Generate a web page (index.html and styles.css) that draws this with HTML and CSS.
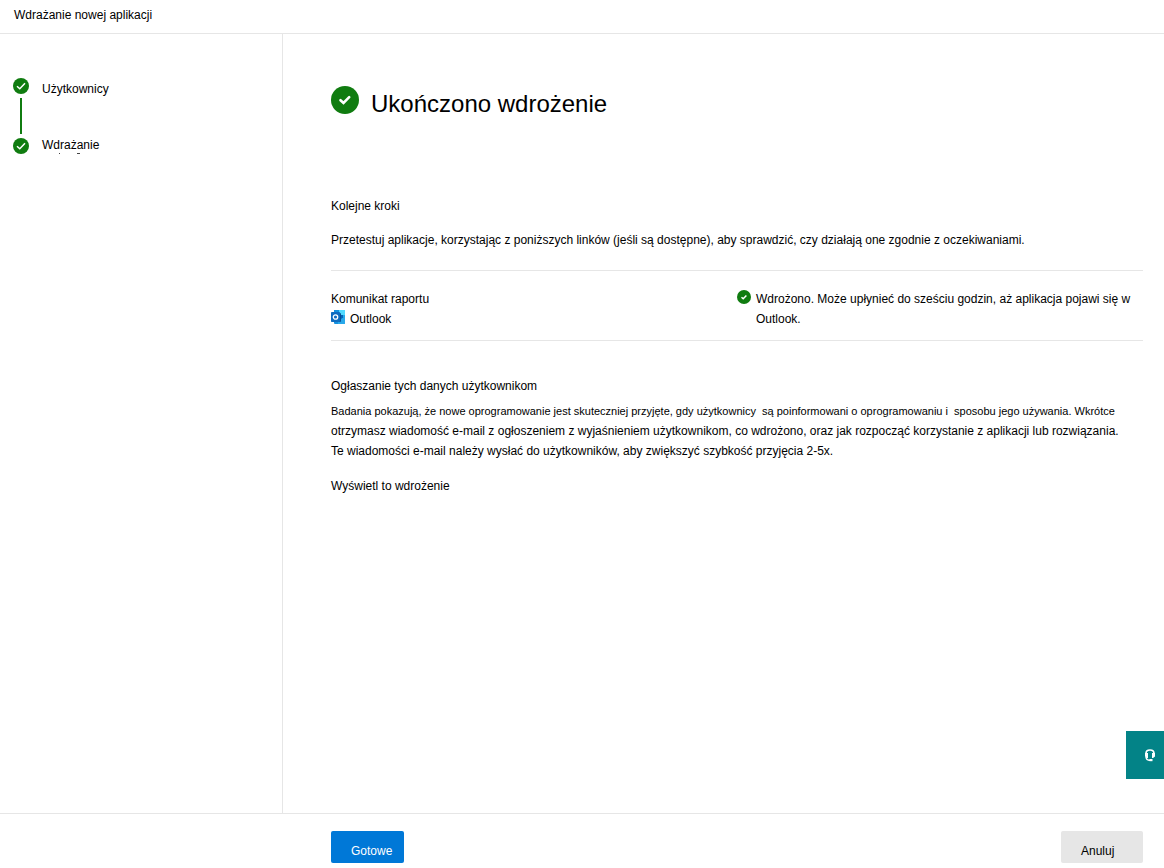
FILE: index.html
```html
<!DOCTYPE html>
<html lang="pl">
<head>
<meta charset="utf-8">
<meta name="viewport" content="width=device-width, initial-scale=1">
<title>Wdrażanie nowej aplikacji</title>
<link rel="stylesheet" href="styles.css">
</head>
<body>
<header class="topbar">Wdrażanie nowej aplikacji</header>
<div class="layout">
  <nav class="sidebar" aria-label="Kroki">
    <ol class="steps">
      <li class="step">
        <svg class="step-icon" viewBox="0 0 16 16" aria-hidden="true"><circle cx="8" cy="8" r="8" fill="#107c10"/><path d="M4 8.2l2.800 2.600 5.200-5.500" fill="none" stroke="#fff" stroke-width="1.500"/></svg>
        <span class="step-label">Użytkownicy</span>
      </li>
      <li class="step">
        <svg class="step-icon" viewBox="0 0 16 16" aria-hidden="true"><circle cx="8" cy="8" r="8" fill="#107c10"/><path d="M4 8.2l2.800 2.600 5.200-5.500" fill="none" stroke="#fff" stroke-width="1.500"/></svg>
        <span class="step-label">Wdrażanie<svg class="step-marks" viewBox="0 0 40 2" aria-hidden="true"><path d="M17 .5h1M35 .5h3" stroke="#444"/></svg></span>
      </li>
    </ol>
  </nav>
  <main class="content">
    <div class="title">
      <svg class="title-icon" viewBox="0 0 28 28" aria-hidden="true"><circle cx="14" cy="14" r="14" fill="#107c10"/><path d="M9.500 14.200l3 2.800 5.700-5.800" fill="none" stroke="#fff" stroke-width="2.600" stroke-linecap="round"/></svg>
      <h1>Ukończono wdrożenie</h1>
    </div>
    <section class="next">
      <h2>Kolejne kroki</h2>
      <p>Przetestuj aplikacje, korzystając z poniższych linków (jeśli są dostępne), aby sprawdzić, czy działają one zgodnie z oczekiwaniami.</p>
    </section>
    <section class="app-row">
      <div class="app">
        <h2>Komunikat raportu</h2>
        <div class="product">
          <svg class="outlook" viewBox="0 0 14 14" aria-hidden="true"><path d="M3 0h11v9H3z" fill="#28a8ea"/><path d="M3 0h5v4H3z" fill="#1490df"/><path d="M8 0h6v5H8z" fill="#50d9ff"/><path d="M8 5h4v4H8z" fill="#0364b8"/><path d="M3 8l5.500 2L14 6.500V13q0 1-1 1H4q-1 0-1-1z" fill="#1490df"/><path d="M14 6.500L7 11v3h6q1 0 1-1z" fill="#28a8ea"/><path d="M3 3h6q1 0 1 1v7q0 1-1 1H3z" fill="#0a4f94"/><rect y="2" width="9" height="10" rx=".7" fill="#0f6cc0"/><circle cx="4.500" cy="7" r="2.200" fill="none" stroke="#fff" stroke-width="1.300"/></svg>
          <span>Outlook</span>
        </div>
      </div>
      <div class="status">
        <svg class="status-icon" viewBox="0 0 14 14" aria-hidden="true"><circle cx="7" cy="7" r="7" fill="#107c10"/><path d="M4.500 7.200l1.700 1.500 3.200-3.200" fill="none" stroke="#fff" stroke-width="1.500"/></svg>
        <p>Wdrożono. Może upłynieć do sześciu godzin, aż aplikacja pojawi się w Outlook.</p>
      </div>
    </section>
    <section class="announce">
      <h2>Ogłaszanie tych danych użytkownikom</h2>
      <p class="lead">Badania pokazują, że nowe oprogramowanie jest skuteczniej przyjęte, gdy użytkownicy&nbsp; są poinformowani o oprogramowaniu i&nbsp; sposobu jego używania. Wkrótce</p>
      <p>otrzymasz wiadomość e-mail z ogłoszeniem z wyjaśnieniem użytkownikom, co wdrożono, oraz jak rozpocząć korzystanie z aplikacji lub rozwiązania.<br>Te wiadomości e-mail należy wysłać do użytkowników, aby zwiększyć szybkość przyjęcia 2-5x.</p>
      <a class="view" href="#">Wyświetl to wdrożenie</a>
    </section>
  </main>
</div>
<footer class="footer">
  <button class="btn primary" type="button">Gotowe</button>
  <button class="btn cancel" type="button">Anuluj</button>
</footer>
<button class="help" type="button" aria-label="Pomoc">
  <svg viewBox="0 0 12 14" aria-hidden="true"><path d="M2 8V5.500Q2 2 6 2t4 3.500V8" fill="none" stroke="#fff" stroke-width="1.700"/><path d="M1 5h3v5H3L1 8.500zM11 5H8v5h1l2-1.500z" fill="#fff"/><path d="M2 9q.5 3.200 3 3.200h3" fill="none" stroke="#fff" stroke-width="1.500"/><path d="M5.500 11h3v2.200h-3z" fill="#fff"/></svg>
</button>
</body>
</html>
```
FILE: styles.css
```css
* { box-sizing: border-box; }
body {
  margin: 0;
  min-height: 100vh;
  display: flex;
  flex-direction: column;
  background: #fff;
  color: #000;
  font: 12px/20px "Liberation Sans", Arial, sans-serif;
}
h1, h2, p, ol { margin: 0; padding: 0; }
h2 { font-size: 12px; font-weight: 400; line-height: 20px; }
svg { display: block; flex: none; }
.topbar { padding: 5px 14px 8px; border-bottom: 1px solid #e6e6e6; }
.layout { flex: 1; display: flex; }
.sidebar { width: 283px; flex: none; padding: 44px 13px; border-right: 1px solid #e6e6e6; }
.steps { list-style: none; }
.step { display: grid; grid-template-columns: 16px 1fr; column-gap: 13px; }
.step + .step::before {
  content: "";
  grid-column: 1 / -1;
  width: 2px;
  height: 36px;
  margin: 4px 7px;
  background: #107c10;
}
.step-icon { width: 16px; height: 16px; }
.step-label { height: 16px; line-height: 22px; }
.step + .step .step-label { line-height: 15px; }
.step-marks { width: 40px; height: 2px; }
.content { flex: 1; min-width: 0; padding: 52px 21px 20px 48px; }
.title { display: flex; gap: 12px; }
.title-icon { width: 28px; height: 28px; }
h1 { font-size: 24px; line-height: 36px; font-weight: 400; }
.next { padding: 74px 0 20px; border-bottom: 1px solid #e6e6e6; }
.next p { margin-top: 14px; }
.app-row { display: grid; grid-template-columns: 1fr 1fr; padding: 18px 0 11px; border-bottom: 1px solid #e6e6e6; }
.product { display: flex; gap: 5px; }
.outlook { width: 14px; height: 14px; margin-top: 1px; }
.status { display: flex; gap: 5px; }
.status-icon { width: 14px; height: 14px; margin-top: 1px; }
.announce { padding-top: 35px; }
.lead { margin-top: 5px; font-size: 11px; }
.view { display: inline-block; margin-top: 15px; color: inherit; text-decoration: none; }
.footer {
  display: flex;
  justify-content: space-between;
  padding: 17px 21px 5px 331px;
  border-top: 1px solid #e6e6e6;
}
.btn { height: 32px; border: 0; border-radius: 2px; font: inherit; padding: 7px 0 0 20px; text-align: left; }
.primary { width: 73px; background: #0078d7; color: #fff; }
.cancel { width: 82px; background: #e6e6e6; color: #000; }
.help {
  position: fixed;
  right: 0;
  bottom: 89px;
  width: 38px;
  height: 48px;
  padding: 0 0 0 18px;
  border: 0;
  background: #038387;
}
.help svg { width: 12px; height: 14px; }
```
